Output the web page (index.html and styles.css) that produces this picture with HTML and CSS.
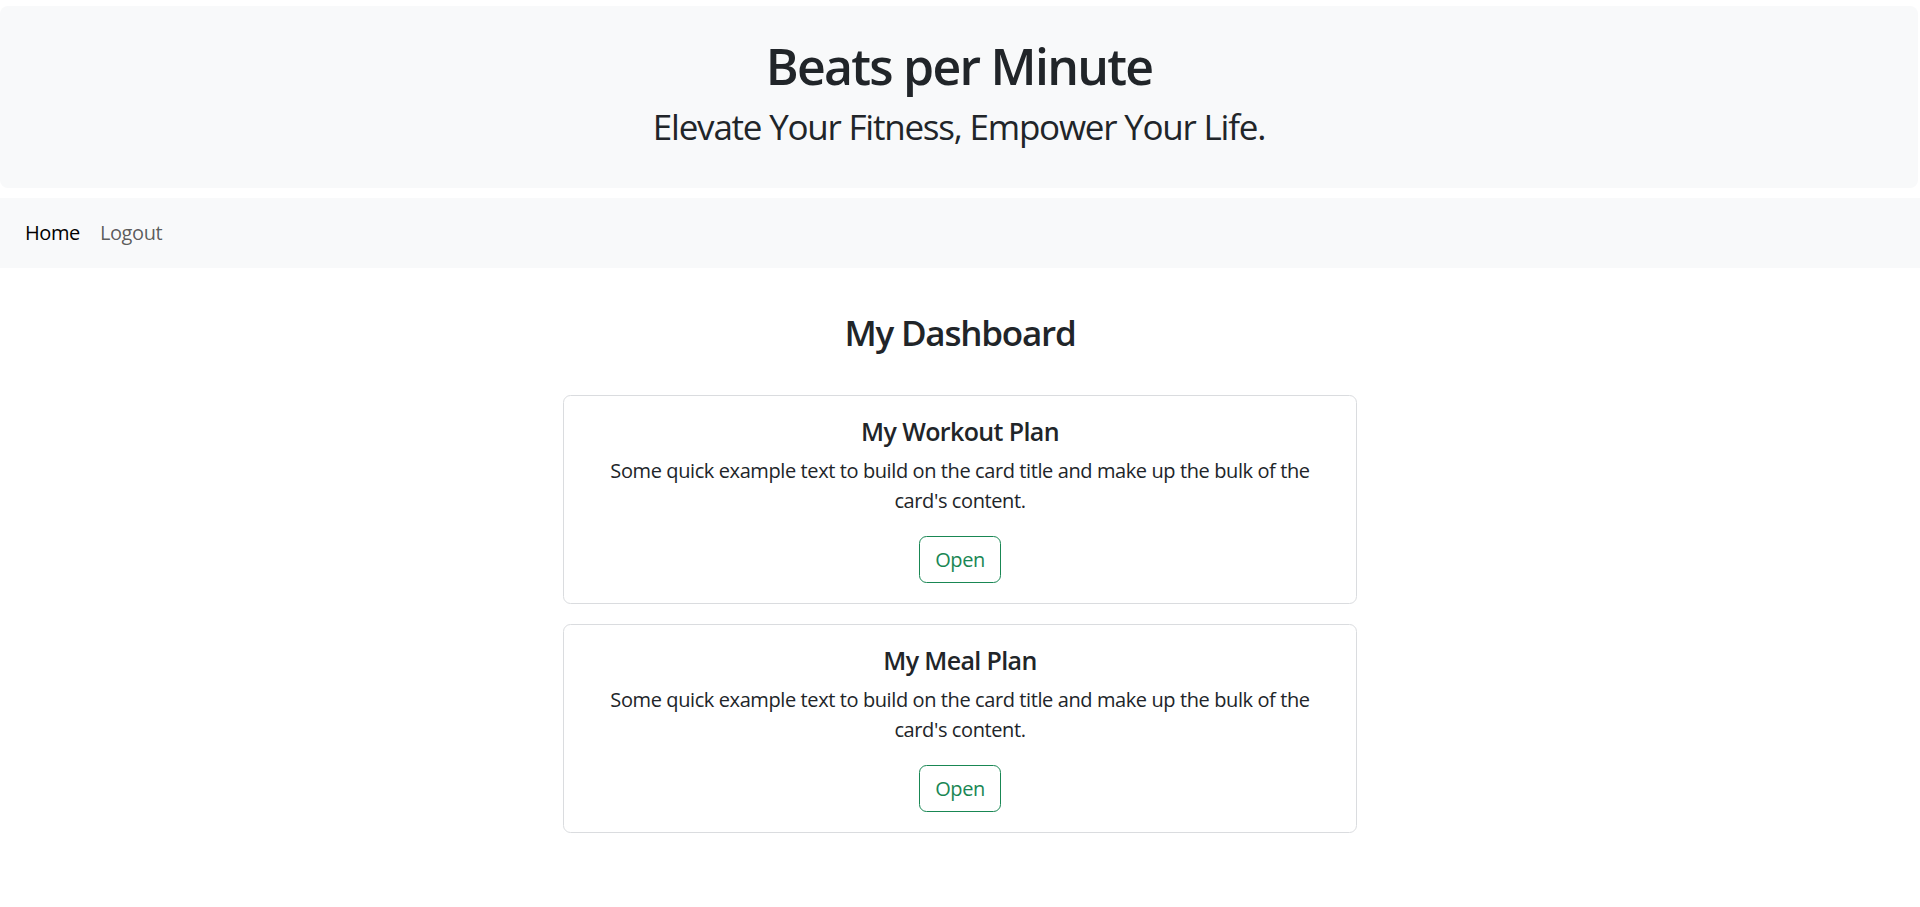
FILE: index.html
```html
<!DOCTYPE html>
<html lang="en">
<head>
<meta charset="utf-8">
<title>Beats per Minute</title>
<link rel="stylesheet" href="styles.css">
</head>
<body>
<header class="hero">
  <h1 class="hero-title">Beats per Minute</h1>
  <h3 class="hero-sub">Elevate Your Fitness, Empower Your Life.</h3>
</header>
<nav class="navbar">
  <ul class="nav-list">
    <li><a class="nav-link active" href="#">Home</a></li>
    <li><a class="nav-link" href="#">Logout</a></li>
  </ul>
</nav>
<main class="dashboard">
  <h3 class="dash-title">My Dashboard</h3>
  <div class="card-list">
    <div class="card">
      <h5 class="card-title">My Workout Plan</h5>
      <p class="card-text">Some quick example text to build on the card title and make up the bulk of the card's content.</p>
      <a class="btn-open" href="#">Open</a>
    </div>
    <div class="card">
      <h5 class="card-title">My Meal Plan</h5>
      <p class="card-text">Some quick example text to build on the card title and make up the bulk of the card's content.</p>
      <a class="btn-open" href="#">Open</a>
    </div>
  </div>
</main>
</body>
</html>
```

FILE: styles.css
```css
* { box-sizing: border-box; }

body {
  margin: 0;
  font-family: "Open Sans", "Noto Sans", sans-serif;
  font-size: 20px;
  line-height: 1.5;
  color: #212529;
  background: #fff;
  letter-spacing: -0.02em;
}

.hero {
  margin: 6px 2px 10px 0;
  padding: 30px 20px;
  background: #f8f9fa;
  border-radius: 8px;
  text-align: center;
}

.hero-title {
  margin: 0 0 10px;
  font-size: 50px;
  font-weight: 600;
  line-height: 1.2;
  letter-spacing: -0.035em;
}

.hero-sub {
  margin: 0 0 10px;
  font-size: 35px;
  font-weight: 400;
  line-height: 1.2;
  letter-spacing: -0.035em;
}

.navbar {
  background: #f8f9fa;
  padding: 10px 15px;
}

.nav-list {
  list-style: none;
  margin: 0;
  padding: 0;
  display: flex;
}

.nav-link {
  display: block;
  padding: 10px;
  font-size: 20px;
  line-height: 30px;
  color: rgba(0, 0, 0, 0.65);
  text-decoration: none;
}

.nav-link.active {
  color: #000;
}

.dashboard {
  text-align: center;
}

.dash-title {
  margin: 44px 0 41px;
  font-size: 35px;
  font-weight: 600;
  line-height: 1.2;
  letter-spacing: -0.035em;
}

.card-list {
  width: 794px;
  margin: 0 auto;
  display: flex;
  flex-direction: column;
  gap: 20px;
}

.card {
  border: 1px solid #dadcdf;
  border-radius: 7.5px;
  padding: 20px;
  background: #fff;
}

.card-title {
  margin: 0 0 10px;
  font-size: 25px;
  font-weight: 600;
  line-height: 1.2;
  letter-spacing: -0.025em;
}

.card-text {
  margin: 0 0 20px;
  font-size: 20px;
  line-height: 30px;
}

.btn-open {
  display: inline-block;
  padding: 7.5px 15px;
  font-size: 20px;
  line-height: 30px;
  color: #198754;
  border: 1px solid #198754;
  border-radius: 7.5px;
  text-decoration: none;
}
```
